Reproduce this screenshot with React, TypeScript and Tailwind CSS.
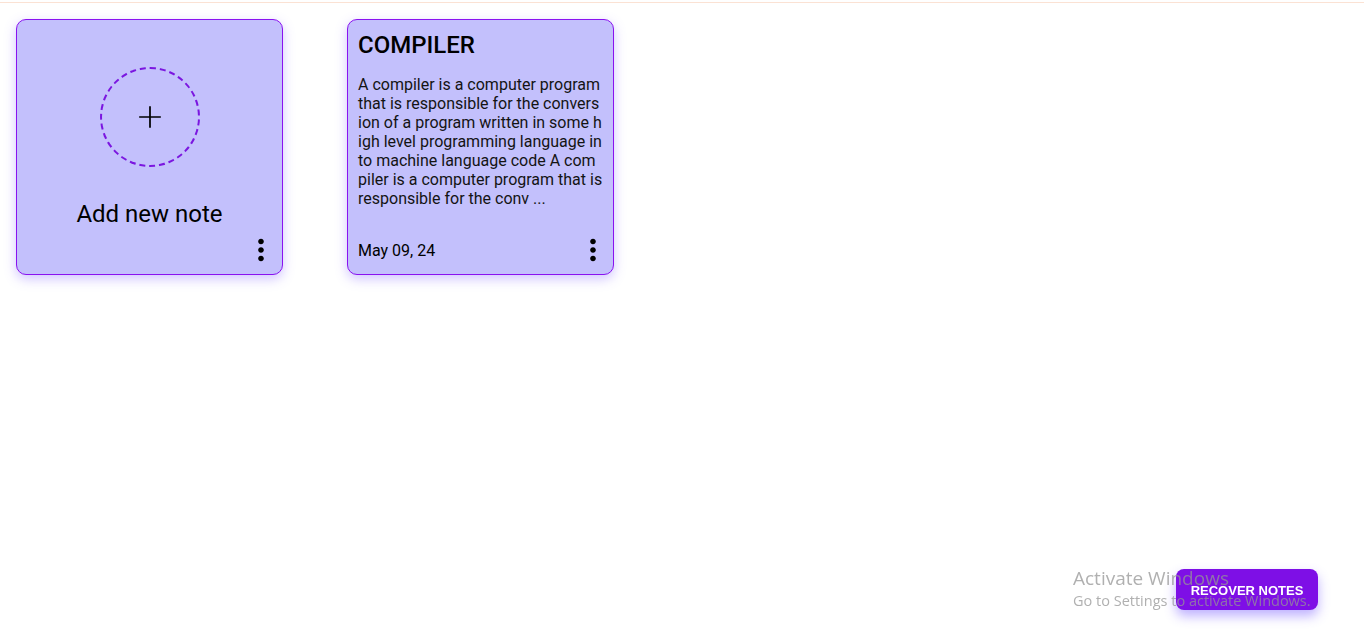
import React from 'react';

const MoreVert = () => (
  <svg viewBox="0 0 24 24" className="w-[34px] h-[34px]" fill="currentColor">
    <path d="M12 8c1.1 0 2-.9 2-2s-.9-2-2-2-2 .9-2 2 .9 2 2 2zm0 2c-1.1 0-2 .9-2 2s.9 2 2 2 2-.9 2-2-.9-2-2-2zm0 6c-1.1 0-2 .9-2 2s.9 2 2 2 2-.9 2-2-.9-2-2-2z" />
  </svg>
);

// body is cut into the same lines the page shows (break-all wrapping)
const note = {
  title: 'COMPILER',
  lines: [
    'A compiler is a computer program',
    'that is responsible for the convers',
    'ion of a program written in some h',
    'igh level programming language in',
    'to machine language code A com',
    'piler is a computer program that is',
    'responsible for the conv ...',
  ],
  date: 'May 09, 24',
};

const cardClass =
  'w-[267px] h-[256px] rounded-[10px] border border-[#8a12f0] bg-[#c3c0fc] shadow-[0_4px_12px_rgba(120,90,255,0.35)] relative';

export default function App() {
  return (
    <div className="min-h-[644px] bg-white font-['Roboto',sans-serif] text-black">
      <div className="mt-[2px] h-px bg-[#fbe2d4]" />
      <div className="flex gap-16 pl-4 pt-4">
        {/* add note card */}
        <div className={cardClass + ' flex flex-col items-center'}>
          <div className="mt-[47px] w-[100px] h-[100px] rounded-full border-2 border-dashed border-[#7b16e0] flex items-center justify-center">
            <svg viewBox="0 0 24 24" className="w-[26px] h-[26px]" stroke="black" strokeWidth="1.6" fill="none">
              <path d="M12 2v20M2 12h20" />
            </svg>
          </div>
          <div className="mt-[32px] text-[24px] leading-[30px]">Add new note</div>
          <div className="absolute right-[4px] bottom-[7px]">
            <MoreVert />
          </div>
        </div>

        {/* note card */}
        <div className={cardClass + ' flex flex-col px-[10px] pt-[10px]'}>
          <h2 className="text-[24px] leading-[30px] font-medium">{note.title}</h2>
          <p className="mt-[15px] text-[16px] leading-[19px] text-[#141414]">
            {note.lines.map((l, i) => (
              <span key={i} className="block whitespace-nowrap">
                {l}
              </span>
            ))}
          </p>
          <div className="mt-auto mb-[7px] flex items-center justify-between">
            <span className="text-[16px] leading-[19px]">{note.date}</span>
            <div className="-mr-[7px]">
              <MoreVert />
            </div>
          </div>
        </div>
      </div>

      <button className="fixed right-[46px] bottom-[34px] w-[142px] h-[41px] rounded-[8px] bg-[#7e0fe6] text-white text-[13px] font-bold font-['Liberation_Sans',sans-serif] shadow-[0_6px_12px_rgba(110,80,255,0.45)] pt-[3px]">
        RECOVER NOTES
      </button>

      <div className="fixed left-[1073px] top-[569px] pointer-events-none font-['Open_Sans',sans-serif] text-[rgba(150,150,150,0.75)] leading-none">
        <div className="text-[19px]">Activate Windows</div>
        <div className="mt-[6px] text-[14.5px]">Go to Settings to activate Windows.</div>
      </div>
    </div>
  );
}
